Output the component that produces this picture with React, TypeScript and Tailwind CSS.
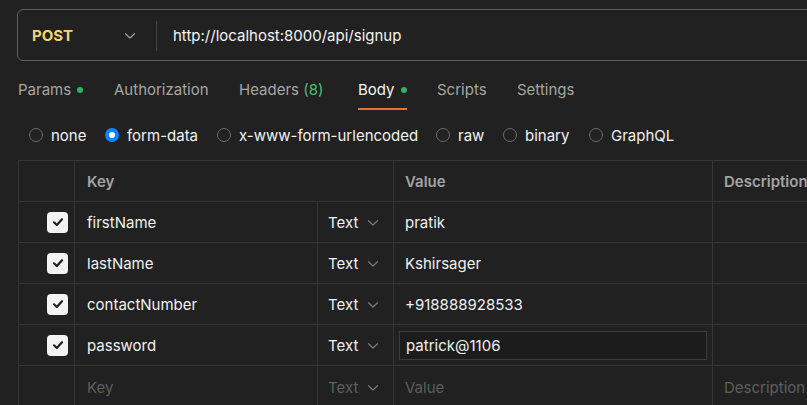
import React from "react";

const Chevron = ({ className = "" }: { className?: string }) => (
  <svg width="12" height="8" viewBox="0 0 12 8" className={className} fill="none">
    <path d="M1.5 1.75 L6 6 L10.5 1.75" stroke="currentColor" strokeWidth="1.2" strokeLinecap="round" strokeLinejoin="round" />
  </svg>
);

const Check = () => (
  <div className="w-[21px] h-[21px] rounded-[4px] bg-[#f3f3f3] flex items-center justify-center">
    <svg width="14" height="14" viewBox="0 0 14 14" fill="none">
      <path d="M3 7.3 L5.8 10 L11 4.2" stroke="#1e1e1e" strokeWidth="2.2" strokeLinecap="round" strokeLinejoin="round" />
    </svg>
  </div>
);

const Radio = ({ on, label }: { on?: boolean; label: string }) => (
  <div className="flex items-center gap-[8px]">
    {on ? (
      <div className="w-[14px] h-[14px] rounded-full bg-[#0d84ff] flex items-center justify-center">
        <div className="w-[6px] h-[6px] rounded-full bg-white" />
      </div>
    ) : (
      <div className="w-[14px] h-[14px] rounded-full border border-[#6a6a6a]" />
    )}
    <span className="text-[#f2f2f2] pt-[1px]">{label}</span>
  </div>
);

const rows = [
  { k: "firstName", v: "pratik" },
  { k: "lastName", v: "Kshirsager" },
  { k: "contactNumber", v: "+918888928533" },
  { k: "password", v: "patrick@1106", focus: true },
];

const cols = "grid grid-cols-[56px_243px_76px_319px_1fr]";

export default function App() {
  return (
    <div
      className="w-[807px] h-[405px] overflow-hidden bg-[#212121] text-[15px] leading-[20px] text-[#f0f0f0]"
      style={{ fontFamily: "Inter, 'Noto Sans', sans-serif" }}
    >
      {/* URL bar */}
      <div className="pl-[17px] pt-[9px]">
        <div className="w-[820px] h-[52px] rounded-[6px] border border-[#5e5e5e] flex items-center pt-[1px]">
          <div className="w-[138px] flex items-center justify-between pl-[14px] pr-[20px]">
            <span className="font-bold text-[#f5d46b]">POST</span>
            <Chevron className="text-[#a0a0a0]" />
          </div>
          <div className="w-px h-[30px] bg-[#444]" />
          <span className="pl-[16px] text-[#f4f4f4]">http://localhost:8000/api/signup</span>
        </div>
      </div>

      {/* Tabs */}
      <div className="flex pl-[18px] h-[49px] text-[#a6a6a6]">
        <div className="w-[96px] flex items-start gap-[6px] pt-[19px]">
          Params <span className="mt-[7px] w-[6px] h-[6px] rounded-full bg-[#2eb35f]" />
        </div>
        <div className="w-[125px] pt-[19px]">Authorization</div>
        <div className="w-[119px] pt-[19px]">
          Headers <span className="text-[#4cbf72]">(8)</span>
        </div>
        <div className="w-[79px]">
          <div className="h-[49px] w-[49px] pt-[19px] flex items-start gap-[6px] text-[#f4f4f4] border-b-2 border-[#f26b3a]">
            Body <span className="mt-[7px] w-[6px] h-[6px] rounded-full bg-[#2eb35f]" />
          </div>
        </div>
        <div className="w-[80px] pt-[19px]">Scripts</div>
        <div className="pt-[19px]">Settings</div>
      </div>

      {/* Radio row */}
      <div className="flex items-center h-[50px] pl-[29px]">
        <div className="w-[76px]"><Radio label="none" /></div>
        <div className="w-[112px]"><Radio on label="form-data" /></div>
        <div className="w-[219px]"><Radio label="x-www-form-urlencoded" /></div>
        <div className="w-[67px]"><Radio label="raw" /></div>
        <div className="w-[86px]"><Radio label="binary" /></div>
        <Radio label="GraphQL" />
      </div>

      {/* Table */}
      <div className="ml-[18px] w-[820px] border-l border-t border-[#353535]">
        <div className={`${cols} h-[41px] border-b border-[#353535] font-semibold text-[#a3a3a3]`}>
          <div className="border-r border-[#353535]" />
          <div className="flex items-center pt-[1px] pl-[12px] col-span-2 border-r border-[#353535]">Key</div>
          <div className="flex items-center pt-[1px] pl-[11px] border-r border-[#353535]">Value</div>
          <div className="flex items-center pt-[1px] pl-[11px]">Description</div>
        </div>
        {rows.map((r) => (
          <div key={r.k} className={`${cols} h-[41px] border-b border-[#353535]`}>
            <div className="flex items-center pl-[28px] border-r border-[#353535]">
              <Check />
            </div>
            <div className="flex items-center pt-[2px] pl-[12px] border-r border-[#353535]">{r.k}</div>
            <div className="flex items-center pt-[2px] pl-[10px] gap-[9px] border-r border-[#353535]">
              <span>Text</span>
              <Chevron className="text-[#7a7a7a]" />
            </div>
            <div className="flex items-center px-[5px] border-r border-[#353535]">
              {r.focus ? (
                <div className="w-full h-[29px] border border-[#3c3c3c] bg-[#1c1c1c] flex items-center pt-[1px] pl-[6px]">
                  {r.v}
                </div>
              ) : (
                <span className="pl-[6px] pt-[2px]">{r.v}</span>
              )}
            </div>
            <div />
          </div>
        ))}
        <div className={`${cols} h-[41px] text-[#5e5e5e]`}>
          <div className="border-r border-[#353535]" />
          <div className="flex items-center pt-[2px] pl-[12px] border-r border-[#353535]">Key</div>
          <div className="flex items-center pt-[2px] pl-[10px] gap-[9px] border-r border-[#353535]">
            <span>Text</span>
            <Chevron className="text-[#7a7a7a]" />
          </div>
          <div className="flex items-center pt-[2px] pl-[11px] border-r border-[#353535]">Value</div>
          <div className="flex items-center pt-[2px] pl-[11px]">Description</div>
        </div>
      </div>
    </div>
  );
}
